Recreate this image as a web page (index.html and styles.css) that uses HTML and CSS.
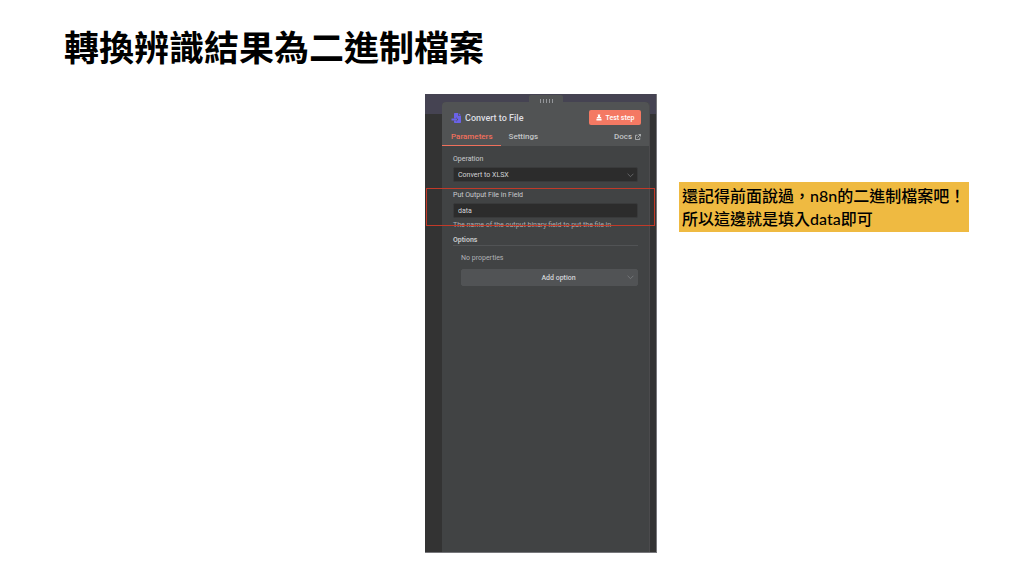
FILE: index.html
```
<!DOCTYPE html>
<html lang="zh-Hant">
<head>
    <meta charset="UTF-8">
    <title>轉換辨識結果為二進制檔案</title>
    <link rel="stylesheet" href="styles.css">
</head>
<body>
<main class="slide">
    <h1>轉換辨識結果為二進制檔案</h1>

    <div class="content">
      <section class="shot">
        <div class="handle">
          <i></i><i></i><i></i><i></i><i></i>
        </div>
        <div class="panel">
          <header class="panel-head">
            <div class="title-row">
              <svg class="node-icon" viewBox="0 0 20 20" aria-hidden="true">
                <path fill="#6a62e8" d="M5 1.500Q5 0 6.500 0H13v5.500h6v13q0 1.500-1.500 1.500h-11Q5 20 5 18.500V15h4v2.500l4.500-4.500L9 8.500V11H5z"/>
                <path fill="#6a62e8" d="M14.500 0 19 4.500h-4.500zM0 11h11v4H0z"/>
              </svg>
              <h2>Convert to File</h2>
              <button type="button" class="test-btn">
                <svg viewBox="0 0 14 14" aria-hidden="true">
                  <path fill="#fff" d="M4 0h6v2H9.500v4H12v3H2V6h2.500V2H4zM1 10h12v4H1z"/>
                </svg>
                Test step
              </button>
            </div>
            <nav class="tabs">
              <a href="#parameters" class="active">Parameters</a>
              <a href="#settings">Settings</a>
              <a href="#docs" class="docs">Docs
                <svg viewBox="0 0 12 12" aria-hidden="true">
                  <path fill="none" stroke="#c3c5c8" stroke-width="1.500" d="M5 2.500H1v8.500h8.500V7M7 1h4v4M11 1 5 7"/>
                </svg>
              </a>
            </nav>
          </header>

          <form class="params" id="parameters">
            <div class="field">
              <label for="operation">Operation</label>
              <div class="select-wrap">
                <select id="operation">
                  <option>Convert to XLSX</option>
                </select>
                <svg class="chevron" viewBox="0 0 12 12" aria-hidden="true"><path d="m1 3 5 5 5-5"/></svg>
              </div>
            </div>

            <div class="field marked">
              <label for="outField">Put Output File in Field</label>
              <input type="text" id="outField" value="data">
              <p class="hint">The name of the output binary field to put the file in</p>
            </div>

            <h3>Options</h3>
            <div class="options">
              <p>No properties</p>
              <div class="select-wrap">
                <select class="add-option" aria-label="Add option">
                  <option>Add option</option>
                </select>
                <svg class="chevron" viewBox="0 0 12 12" aria-hidden="true"><path d="m1 3 5 5 5-5"/></svg>
              </div>
            </div>
          </form>
        </div>
      </section>

      <p class="note">還記得前面說過，n8n的二進制檔案吧！<br>所以這邊就是填入data即可</p>
    </div>
</main>
</body>
</html>
```
FILE: styles.css
```
* { box-sizing: border-box; }
body {
    margin: 0;
    background: #fff;
    color: #000;
    font-family: Roboto, "Noto Sans CJK TC", sans-serif;
}
h1, h2, h3, p { margin: 0; }
.slide {
    display: flex;
    flex-direction: column;
    min-height: 100vh;
    padding: 22px 55px 23px 64px;
}
h1 {
    font-family: "Noto Sans CJK TC", sans-serif;
    font-size: 35px;
    line-height: 48px;
    font-weight: 700;
}
.content {
    display: flex;
    flex: 1;
    justify-content: flex-end;
    align-items: flex-start;
    gap: 22px;
    margin-top: 24px;
}

/* node window */
.shot {
    display: flex;
    flex-direction: column;
    align-self: stretch;
    width: 232px;
    padding: 1px 6px 0 17px;
    border: 1px solid #77777b;
    border-width: 0 1px 1px 0;
    background: linear-gradient(#454352 20px, #333 20px);
}
.handle {
    display: flex;
    justify-content: center;
    align-items: center;
    gap: 2px;
    align-self: center;
    width: 34px;
    height: 7px;
    padding-top: 5px;
    border-radius: 2px 2px 0 0;
    background: #515354;
}
.handle i { z-index: 1; flex: none; width: 1px; height: 4px; background: #94969a; }
.panel {
    flex: 1;
    border-radius: 4px 4px 0 0;
    border-right: 1px solid #4b4b4d;
    background: #414344;
    color: #c9cbce;
    font-size: 7px;
    line-height: 10px;
}
.panel-head { border-radius: 4px 4px 0 0; background: #515354; }
.title-row {
    display: flex;
    align-items: center;
    gap: 3px;
    padding: 8px 8px 0 9px;
}
.node-icon { width: 11px; height: 10px; }
h2 { flex: 1; font-size: 9px; line-height: 14px; font-weight: 500; color: #dddee2; }
.test-btn {
    display: flex;
    align-items: center;
    justify-content: center;
    gap: 4px;
    width: 52px;
    height: 15px;
    padding: 0;
    border: 0;
    border-radius: 2px;
    background: #f47963;
    color: #fff;
    font: 500 7px/10px Roboto, sans-serif;
}
.test-btn svg { width: 6px; height: 7px; }
.tabs { display: flex; padding-top: 6px; font-size: 8px; line-height: 12px; font-weight: 500; }
.tabs a {
    padding: 0 8px 2px;
    border-bottom: 1px solid transparent;
    color: #c3c5c8;
    text-decoration: none;
}
.tabs a.active { padding-left: 9px; border-color: #f0705c; color: #f0705c; }
.tabs .docs { display: flex; align-items: center; gap: 3px; margin-left: auto; }
.docs svg { width: 6px; height: 6px; }

.params { padding: 8px 11px 0; }
.field { margin-bottom: 8px; }
label { display: block; margin-bottom: 3px; }
.select-wrap { position: relative; }
select, input {
    display: block;
    width: 100%;
    height: 15px;
    padding: 0 4px;
    border: 1px solid #393a3b;
    border-radius: 2px;
    appearance: none;
    background: #2c2c2c;
    color: #d3d5d8;
    font: 400 7px/10px Roboto, sans-serif;
}
.chevron { position: absolute; right: 4px; top: 5px; width: 7px; height: 7px; fill: none; stroke: #8b8d90; }
.hint { margin-top: 2px; color: #aaacaf; }

/* red frame around the output field */
.marked { position: relative; margin-bottom: 5px; }
.marked::after {
    content: "";
    position: absolute;
    inset: -2px -17px 4px -27px;
    border: 1px solid #c23a29;
    pointer-events: none;
}
h3 { border-bottom: 1px solid #515355; font-size: 7px; line-height: 10px; font-weight: 600; }
.options { padding: 7px 0 0 8px; color: #b0b2b5; }
.options p { margin-bottom: 6px; }
select.add-option {
    height: 17px;
    padding: 0 0 0 18px;
    border-color: #515355;
    background: #515355;
    text-align: center;
    text-align-last: center;
    font-weight: 500;
}

.note {
    width: 290px;
    margin-top: 88px;
    padding: 2px 3px;
    background: #efba41;
    font: 500 16px/23px Lato, "Noto Sans CJK TC", sans-serif;
    white-space: nowrap;
}
```
